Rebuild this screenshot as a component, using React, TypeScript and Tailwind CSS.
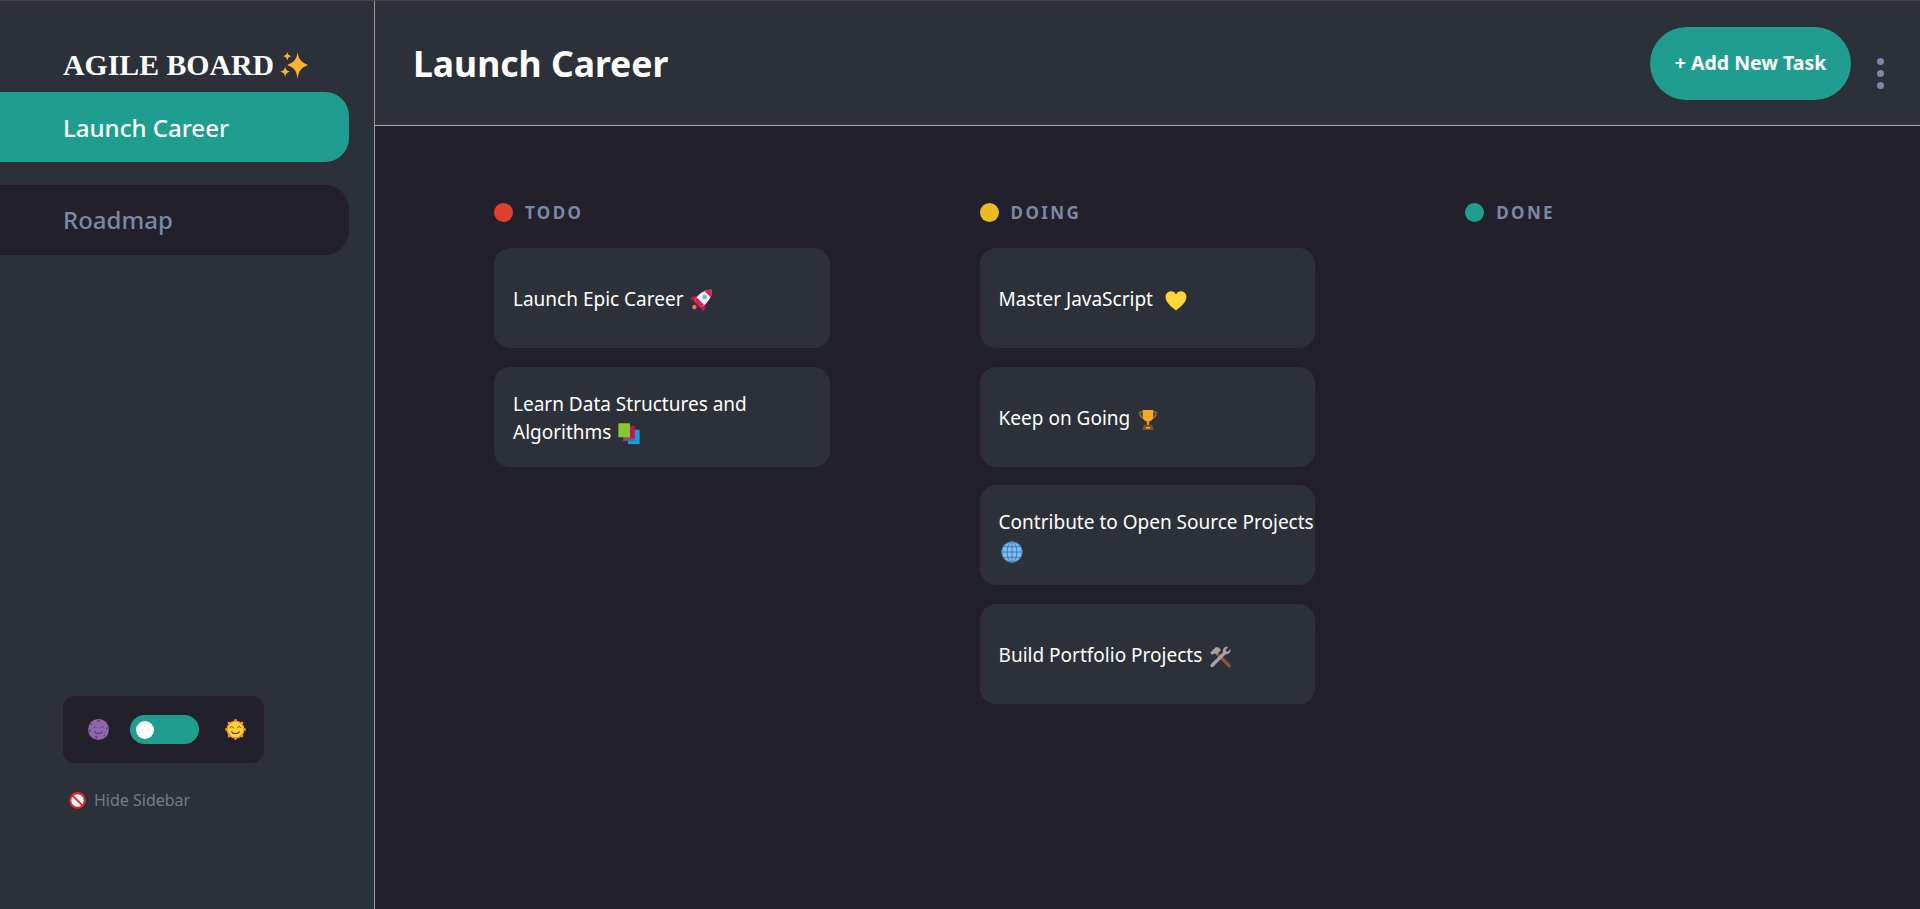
import type { ReactNode } from 'react'

// emoji drawn on a 20 unit box, padded to the 26px advance they have in the text
function Emoji({ children, className = '' }: { children: ReactNode; className?: string }) {
  return (
    <svg viewBox="-2.2 -2.2 24.4 24.4" className={`-my-[6px] inline-block h-[26px] w-[26px] align-[-2px] ${className}`}>
      {children}
    </svg>
  )
}

const Rocket = (
  <Emoji>
    <g transform="translate(10.8 8.8) rotate(45) scale(1.3) translate(-10 -10)">
      <path d="M6.4 8.5 L3.6 13.5 V16 L6.8 14Z M13.6 8.5 L16.4 13.5 V16 L13.2 14Z" fill="#c8174a" />
      <path d="M10 0 C14 3 14.6 9 13.4 14.5 H6.6 C5.4 9 6 3 10 0Z" fill="#f5f1f1" />
      <path d="M10 0 C11.6 1.2 12.6 2.6 13.2 4.2 H6.8 C7.4 2.6 8.4 1.2 10 0Z" fill="#dc1f50" />
      <path d="M6.3 11.5 H13.7 L13.4 15 H6.6Z" fill="#dc1f50" />
      <circle cx="10" cy="7.2" r="1.7" fill="#86aed4" />
      <circle cx="10" cy="17.6" r="1.6" fill="#f0784c" />
    </g>
  </Emoji>
)

const Books = (
  <Emoji>
    <rect x="9" y="6" width="11" height="13.5" fill="#0f9fe2" />
    <rect x="4.5" y="3" width="10.5" height="13.5" fill="#7d5674" />
    <rect x="10.5" y="3" width="5" height="11" fill="#c4134f" />
    <rect x="0" y="0" width="11" height="13" rx="0.5" fill="#86c92e" />
  </Emoji>
)

const Heart = (
  <Emoji className="ml-[5px]">
    <path
      d="M10 18.8 C4 14.2 0.2 10.6 0.2 6 C0.2 3 2.6 0.8 5.3 0.8 C7.3 0.8 9 1.9 10 3.8 C11 1.9 12.7 0.8 14.7 0.8 C17.4 0.8 19.8 3 19.8 6 C19.8 10.6 16 14.2 10 18.8Z"
      fill="#fdd535"
    />
  </Emoji>
)

const Trophy = (
  <Emoji>
    <path d="M5 2.5 H2.4 C2.4 6 3.6 8 6 8.6 M15 2.5 H17.6 C17.6 6 16.4 8 14 8.6" fill="none" stroke="#c47a1e" strokeWidth="1.1" />
    <path d="M5 0.5 H15 V6.5 C15 9.6 12.6 11.6 10 11.6 C7.4 11.6 5 9.6 5 6.5Z" fill="#f7a625" />
    <rect x="8.8" y="11" width="2.4" height="4" fill="#e8951f" />
    <path d="M6 14.5 H14 L15.5 19.5 H4.5Z" fill="#7c4a26" />
    <rect x="8" y="16.5" width="4" height="1.6" fill="#f7a625" />
  </Emoji>
)

const Globe = (
  <Emoji>
    <circle cx="10" cy="10" r="9.8" fill="#7fbbeb" />
    <g fill="none" stroke="#3d7db6" strokeWidth="0.9">
      <circle cx="10" cy="10" r="9.6" />
      <ellipse cx="10" cy="10" rx="4.6" ry="9.6" />
      <path d="M10 0.4 V19.6 M0.4 10 H19.6 M1.8 5 H18.2 M1.8 15 H18.2" />
    </g>
  </Emoji>
)

const Tools = (
  <Emoji>
    <path d="M8 7.5 L18.6 18.2" stroke="#8f5336" strokeWidth="3.2" strokeLinecap="round" />
    <path d="M0.8 6 L6 0.8 L8.4 0.8 L11 3.4 L6.6 8 L5 6.4 L2.8 8Z" fill="#a89fa9" />
    <path d="M2.5 18 L14.5 6" stroke="#a89fa9" strokeWidth="3.2" strokeLinecap="round" />
    <path d="M19.8 2.6 L17 5.4 L15 3.6 L17.6 0.6 C14.6 -0.2 12.4 2.2 12.8 5.2 L15 7.4 C17.8 8 20.6 5.6 19.8 2.6Z" fill="#a89fa9" />
  </Emoji>
)

function Face({ stroke }: { stroke: string }) {
  return (
    <g fill="none" stroke={stroke} strokeWidth="0.9" strokeLinecap="round">
      <path d="M4.8 8.4 C5.6 6.8 7.2 6.8 8 8.4 M12 8.4 C12.8 6.8 14.4 6.8 15.2 8.4" />
      <path d="M6.4 12.2 C8 14.6 12 14.6 13.6 12.2" strokeWidth="1.1" />
    </g>
  )
}

const columns: { name: string; dot: string; tasks: { text: string; icon: ReactNode }[] }[] = [
  {
    name: 'TODO',
    dot: 'bg-[#e03f30]',
    tasks: [
      { text: 'Launch Epic Career', icon: Rocket },
      { text: 'Learn Data Structures and Algorithms', icon: Books },
    ],
  },
  {
    name: 'DOING',
    dot: 'bg-[#ecb920]',
    tasks: [
      { text: 'Master JavaScript', icon: Heart },
      { text: 'Keep on Going', icon: Trophy },
      { text: 'Contribute to Open Source Projects', icon: Globe },
      { text: 'Build Portfolio Projects', icon: Tools },
    ],
  },
  { name: 'DONE', dot: 'bg-[#1f9e8f]', tasks: [] },
]

export default function App() {
  return (
    <div className="flex h-[909px] overflow-hidden border-t border-[#4a4347] bg-[#21202b] font-['Noto_Sans',sans-serif] text-white">
      <aside className="flex w-[375px] shrink-0 flex-col border-r border-[#9a9a9a] bg-[#2c3038] pr-[25px]">
        <h1 className="flex items-center pt-[41px] pb-[5px] pl-[63px] font-['Liberation_Serif',serif] text-[29.8px] leading-[45px] font-bold whitespace-nowrap">
          AGILE BOARD
          <svg viewBox="0 0 27 27" className="ml-[6px] h-[28px] w-[28px]" fill="#f9b233">
            <path d="M17 1 C18 8 20 10.5 27 13.5 C20 16.5 18 19 17 27 C16 19 14 16.5 7 13.5 C14 10.5 16 8 17 1Z" />
            <path d="M7 1 C7.6 3.6 8.4 4.4 11 5 C8.4 5.6 7.6 6.4 7 9 C6.4 6.4 5.6 5.6 3 5 C5.6 4.4 6.4 3.6 7 1Z" />
            <path d="M5 15 C5.6 18.2 6.8 19.4 10 20 C6.8 20.6 5.6 21.8 5 25 C4.4 21.8 3.2 20.6 0 20 C3.2 19.4 4.4 18.2 5 15Z" />
          </svg>
        </h1>
        <div className="flex h-[70px] items-center rounded-r-3xl bg-[#1f9e8f] pt-[2px] pl-[63px] text-2xl font-medium">
          Launch Career
        </div>
        <div className="mt-[23px] flex h-[70px] items-center rounded-r-3xl bg-[#21202b] pl-[63px] text-2xl font-medium text-[#7c88a4]">
          Roadmap
        </div>
        <div className="mt-[441px] ml-[63px] flex h-[67px] w-[201px] items-center rounded-xl bg-[#21202b] pl-[25px]">
          <svg viewBox="0 0 20 20" className="mr-[21px] h-[21px] w-[21px]">
            <circle cx="10" cy="10" r="10" fill="#9167ab" />
            <g fill="#6d4489">
              <circle cx="10" cy="2" r="1.4" />
              <circle cx="3" cy="5" r="1" />
              <circle cx="1.8" cy="11" r="1.2" />
              <circle cx="8" cy="17.2" r="1.5" />
              <circle cx="15.5" cy="16" r="1" />
              <circle cx="18" cy="9" r="0.9" />
            </g>
            <Face stroke="#5b3a75" />
          </svg>
          <div className="flex h-[29px] w-[69px] items-center rounded-full bg-[#1f9e8f] pl-[6px]">
            <div className="h-[18px] w-[18px] rounded-full bg-white" />
          </div>
          <svg viewBox="0 0 20 20" className="ml-[26px] h-[21px] w-[21px]">
            <circle cx="10" cy="10" r="8.6" fill="#f68c1e" />
            <g fill="#f68c1e">
              <circle cx="10" cy="1.4" r="1.4" />
              <circle cx="10" cy="18.6" r="1.4" />
              <circle cx="1.4" cy="10" r="1.4" />
              <circle cx="18.6" cy="10" r="1.4" />
              <circle cx="3.9" cy="3.9" r="1.4" />
              <circle cx="16.1" cy="3.9" r="1.4" />
              <circle cx="3.9" cy="16.1" r="1.4" />
              <circle cx="16.1" cy="16.1" r="1.4" />
            </g>
            <circle cx="10" cy="10" r="7.4" fill="#fdd23f" />
            <Face stroke="#5c3c1c" />
          </svg>
        </div>
        <div className="mt-[25px] ml-[69px] flex h-6 items-center gap-2 text-base text-[#747b8c]">
          <svg viewBox="0 0 20 20" className="h-[17px] w-[17px]">
            <circle cx="10" cy="10" r="8.6" fill="#fff" stroke="#e0262c" strokeWidth="2.6" />
            <path d="M4 4 L16 16" stroke="#e0262c" strokeWidth="2.4" />
          </svg>
          Hide Sidebar
        </div>
      </aside>
      <main className="flex min-w-0 flex-1 flex-col">
        <header className="flex h-[125px] shrink-0 items-center border-b border-[#a8a8a8] bg-[#2c3038] pl-[38px]">
          <h2 className="pt-[2px] text-[35.5px] font-bold">Launch Career</h2>
          <button className="mr-[26px] ml-auto h-[73px] w-[201px] rounded-full bg-[#1f9e8f] text-[19.5px] font-bold">
            + Add New Task
          </button>
          <div className="mt-[20px] mr-[36px] flex flex-col gap-[5px]">
            <span className="h-[7px] w-[7px] rounded-full bg-[#7c88a4]" />
            <span className="h-[7px] w-[7px] rounded-full bg-[#7c88a4]" />
            <span className="h-[7px] w-[7px] rounded-full bg-[#7c88a4]" />
          </div>
        </header>
        <div className="flex gap-[150px] pt-[77px] pl-[119px]">
          {columns.map((col) => (
            <section key={col.name} className="w-[335.6px] shrink-0">
              <div className="mb-[26px] flex h-[19px] items-center gap-3">
                <span className={`h-[19px] w-[19px] rounded-full ${col.dot}`} />
                <span className="text-[17px] font-bold tracking-[2.4px] text-[#7c88a4]">{col.name}</span>
              </div>
              <div className="flex flex-col gap-[18.7px]">
                {col.tasks.map((t) => (
                  <div
                    key={t.text}
                    className="flex h-[100px] items-center rounded-2xl bg-[#2c3038] pt-[2px] pl-[19px] text-[19px] leading-[28px] shadow-[0_10px_20px_rgba(54,78,126,0.05)]"
                  >
                    <p>
                      {t.text} {t.icon}
                    </p>
                  </div>
                ))}
              </div>
            </section>
          ))}
        </div>
      </main>
    </div>
  )
}
